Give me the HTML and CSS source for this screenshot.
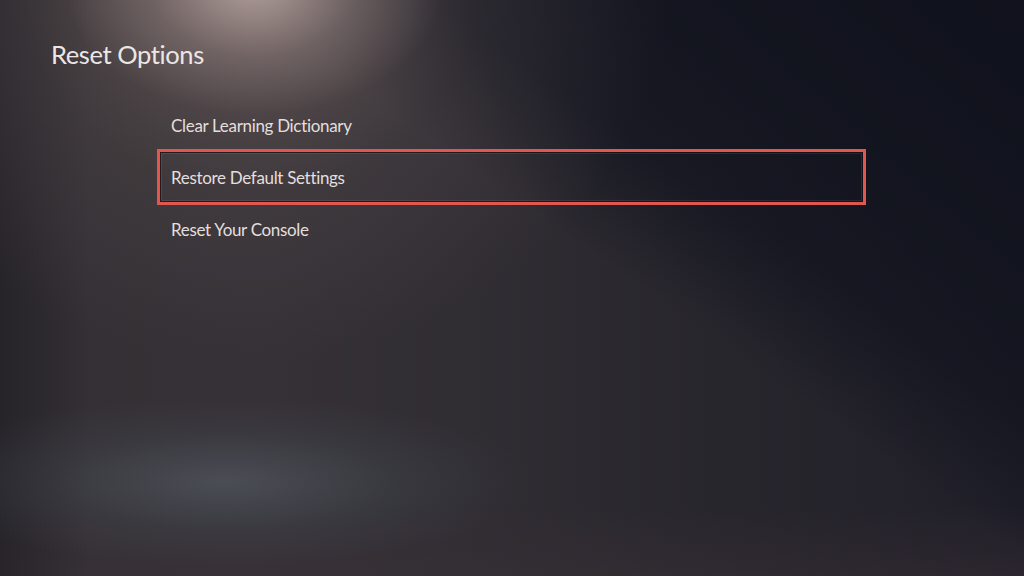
FILE: index.html
```html
<!DOCTYPE html>
<html lang="en">
<head>
<meta charset="utf-8">
<title>Reset Options</title>
<link rel="stylesheet" href="styles.css">
</head>
<body>
<div class="screen">
  <h1 class="title">Reset Options</h1>
  <ul class="menu">
    <li class="item">Clear Learning Dictionary</li>
    <li class="item selected">Restore Default Settings</li>
    <li class="item">Reset Your Console</li>
  </ul>
</div>
</body>
</html>
```

FILE: styles.css
```css
html, body {
  margin: 0;
  padding: 0;
  width: 1024px;
  height: 576px;
  overflow: hidden;
  background: #13151f;
}

.screen {
  width: 1024px;
  height: 576px;
  box-sizing: border-box;
  padding-top: 38px;
  font-family: Lato, "Open Sans", "Noto Sans", sans-serif;
  color: #e6e2e0;
  background-color: #13151f;
  background-image:
    radial-gradient(ellipse 190px 130px at 255px -15px, rgba(205,185,180,0.72), rgba(170,150,146,0.32) 55%, rgba(150,130,128,0) 100%),
    radial-gradient(ellipse 420px 380px at 250px -20px, rgba(135,115,112,0.55), rgba(100,88,88,0.24) 55%, rgba(70,62,64,0) 100%),
    radial-gradient(ellipse 310px 85px at 225px 482px, rgba(88,95,104,0.62), rgba(72,78,88,0.3) 55%, rgba(60,64,72,0) 100%),
    linear-gradient(35deg, rgba(17,19,30,0) 0%, rgba(17,19,30,0) 57%, rgba(17,19,30,0.72) 68%, rgba(17,19,30,0.9) 80%, rgba(15,17,28,0.96) 100%),
    linear-gradient(90deg, rgba(22,22,30,0.45) 0px, rgba(22,22,30,0) 90px),
    linear-gradient(180deg, rgba(0,0,0,0) 88%, rgba(62,50,58,0.35) 100%),
    linear-gradient(90deg, #332f33 0%, #353136 25%, #302d33 45%, #28262d 70%, #201f28 100%);
}

.title {
  margin: 0 0 0 51px;
  font-size: 25.5px;
  line-height: 32px;
  font-weight: 400;
  letter-spacing: -0.4px;
  color: #ebe7e5;
}

.menu {
  list-style: none;
  margin: 29px 0 0 159px;
  padding: 0;
  width: 705px;
}

.item {
  height: 52px;
  display: flex;
  align-items: center;
  padding-left: 12px;
  font-size: 17px;
  letter-spacing: -0.32px;
  color: #e2dfdd;
}

.selected {
  outline: 3px solid #e2564e;
  outline-offset: -1px;
  box-shadow: inset 0 0 0 2px rgba(10,10,14,0.7), inset 0 0 0 3px rgba(255,255,255,0.08);
}
```
